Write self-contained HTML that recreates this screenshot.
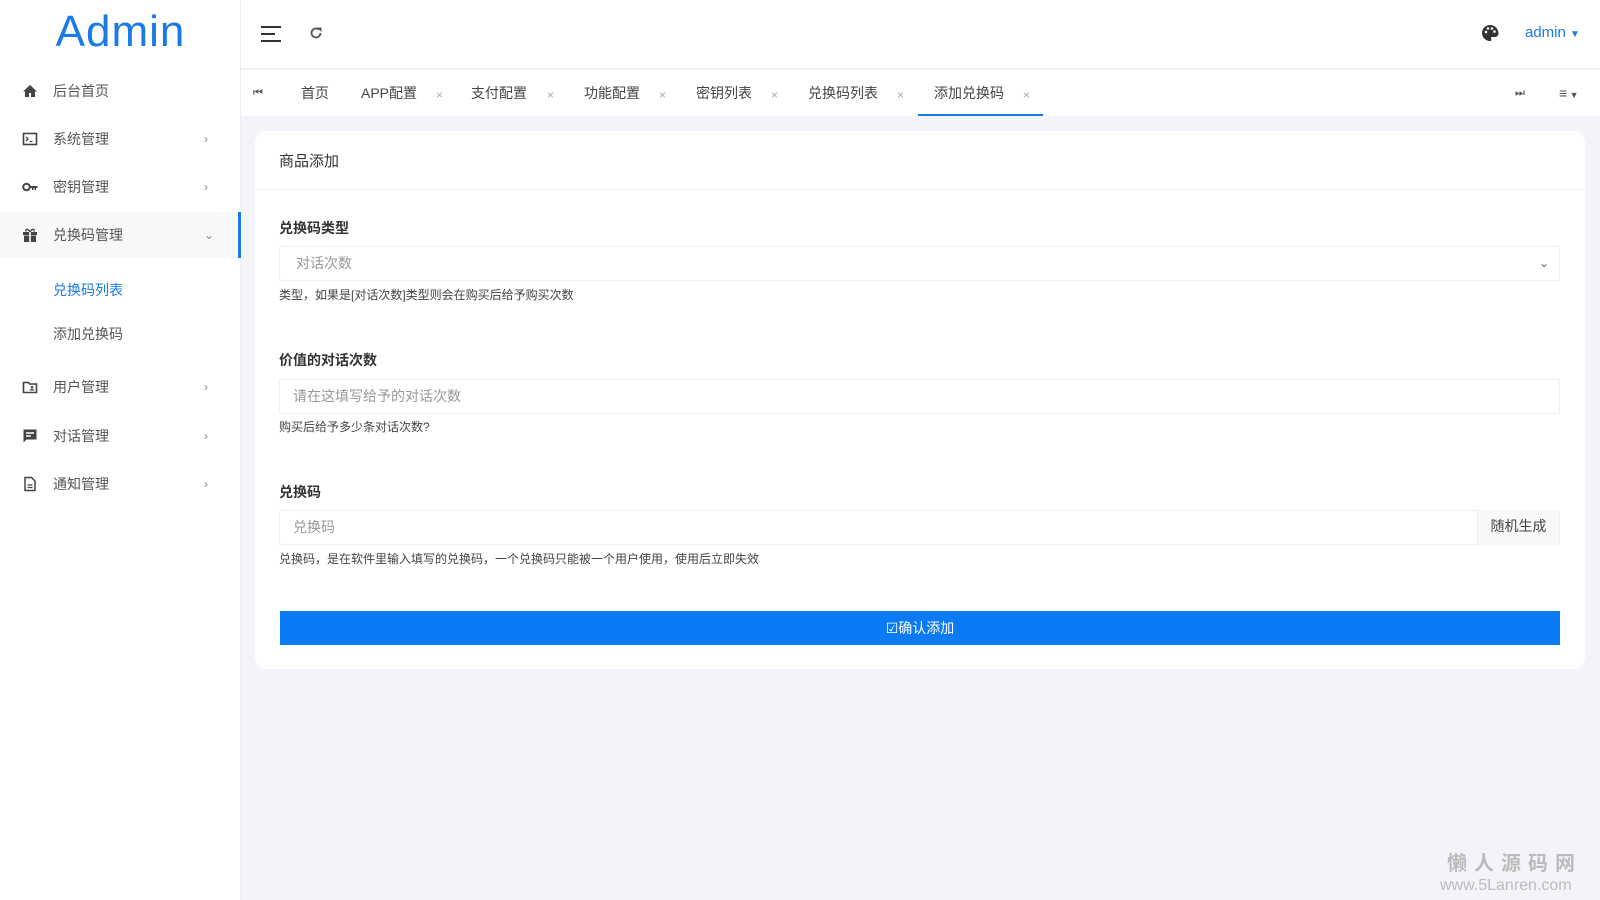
<!DOCTYPE html>
<html><head><meta charset="utf-8"><style>
*{box-sizing:border-box;margin:0;padding:0}
body{width:1600px;height:900px;overflow:hidden;background:#f3f4f9;font-family:"Liberation Sans","Noto Sans CJK SC",sans-serif;color:#333;position:relative}
.abs{position:absolute}
#side{left:0;top:0;width:241px;height:900px;background:#fff;border-right:1px solid #eceef3}
.logo{left:0;width:241px;top:7px;text-align:center;font-size:44px;color:#1a7ae8;letter-spacing:1px}
.mi{left:0;width:241px;height:46px;font-size:14px;color:#555;line-height:46px}
.mi .t{position:absolute;left:53px}
.mi .ic{position:absolute;left:22px;top:15px;width:16px;height:16px}
.mi .ar{position:absolute;left:204px;color:#888;font-size:12px}
.act{background:#f7f8fa;border-right:3px solid #1a7ae8}
#top{left:241px;top:0;width:1359px;height:69px;background:#fff;border-bottom:1px solid #eef0f4}
#tabs{left:241px;top:70px;width:1359px;height:46px;background:#fff}
.tab{top:0;height:46px;line-height:46px;font-size:14px;color:#444}
.x{top:2px;line-height:46px;font-size:12px;color:#aaa}
#card{left:255px;top:131px;width:1330px;height:538px;background:#fff;border-radius:12px}
.lbl{font-size:14px;font-weight:bold;color:#333}
.inp{height:35px;border:1px solid #eef0f3;border-radius:2px;font-size:14px;color:#999;line-height:33px;padding-left:13px}
.help{font-size:12px;color:#444}
</style></head><body>
<div id="side" class="abs">
 <div class="abs logo">Admin</div>
 <div class="abs mi" style="top:68px"><svg class="ic" viewBox="0 0 16 16"><path d="M8 2L1 8.5h2V14h4v-4h2v4h4V8.5h2z" fill="#444"/></svg><span class="t">后台首页</span></div>
 <div class="abs mi" style="top:116px"><svg class="ic" viewBox="0 0 16 16"><rect x="1.5" y="2.5" width="13" height="11" fill="none" stroke="#444" stroke-width="1.6"/><path d="M4 6l2 2-2 2M7.5 10.5h3" stroke="#444" fill="none" stroke-width="1.3"/></svg><span class="t">系统管理</span><span class="ar">›</span></div>
 <div class="abs mi" style="top:164px"><svg class="ic" viewBox="0 0 16 16"><circle cx="4.5" cy="8" r="3.3" fill="none" stroke="#444" stroke-width="2"/><path d="M7.5 7h8v2h-1.5v2h-1.5v-2h-1v2h-1.5v-2h-2.5z" fill="#444"/></svg><span class="t">密钥管理</span><span class="ar">›</span></div>
 <div class="abs mi act" style="top:212px"><svg class="ic" viewBox="0 0 16 16"><rect x="1" y="5" width="14" height="3" fill="#444"/><rect x="2" y="8.5" width="12" height="6.5" fill="#444"/><path d="M8 5C6 1 3 2 4 4.5M8 5c2-4 5-3 4-.5" stroke="#444" fill="none" stroke-width="1.4"/><rect x="7.2" y="5" width="1.6" height="10" fill="#fff"/></svg><span class="t">兑换码管理</span><span class="ar">⌄</span></div>
 <div class="abs mi" style="top:272px;color:#1a7ae8;height:36px;line-height:36px"><span class="t">兑换码列表</span></div>
 <div class="abs mi" style="top:316px;height:36px;line-height:36px"><span class="t">添加兑换码</span></div>
 <div class="abs mi" style="top:364px"><svg class="ic" viewBox="0 0 16 16"><path d="M1.5 3.5h5l1 1.5h7v8.5h-13z" fill="none" stroke="#444" stroke-width="1.6"/><circle cx="10" cy="8.3" r="1.3" fill="#444"/><path d="M7.5 11.5c0-2 5-2 5 0z" fill="#444"/></svg><span class="t">用户管理</span><span class="ar">›</span></div>
 <div class="abs mi" style="top:413px"><svg class="ic" viewBox="0 0 16 16"><path d="M1.5 1.5h13v10h-10l-3 3z" fill="#444"/><path d="M4 5h8M4 8h5" stroke="#fff" stroke-width="1.4"/></svg><span class="t">对话管理</span><span class="ar">›</span></div>
 <div class="abs mi" style="top:461px"><svg class="ic" viewBox="0 0 16 16"><path d="M3 1.5h6.5l3.5 3.5v9.5H3z" fill="none" stroke="#444" stroke-width="1.5"/><path d="M5.5 9h5M5.5 11.5h5" stroke="#444" stroke-width="1.3"/></svg><span class="t">通知管理</span><span class="ar">›</span></div>
</div>
<div id="top" class="abs">
 <svg class="abs" style="left:19px;top:25px" width="22" height="18" viewBox="0 0 22 18"><path d="M1 2h20M1 9h14M1 16h20" stroke="#333" stroke-width="2"/></svg>
 <svg class="abs" style="left:68px;top:26px" width="14" height="14" viewBox="0 0 14 14"><path d="M11.5 7a4.5 4.5 0 1 1-1.5-3.4" fill="none" stroke="#555" stroke-width="1.8"/><path d="M8 1.5h4.5v4.5z" fill="#555"/></svg>
 <svg class="abs" style="left:1240px;top:24px" width="18" height="18" viewBox="0 0 18 18"><path d="M9 1a8 8 0 1 0 0 16c1.5 0 1.8-1 1.2-2-.6-1 0-2 1.3-2H14a3.5 3.5 0 0 0 3.5-3.5C17.5 4.5 13.5 1 9 1z" fill="#333"/><circle cx="5" cy="8" r="1.3" fill="#fff"/><circle cx="7" cy="4.5" r="1.3" fill="#fff"/><circle cx="11" cy="4.5" r="1.3" fill="#fff"/><circle cx="13.5" cy="7.5" r="1.3" fill="#fff"/></svg>
 <div class="abs" style="left:1284px;top:24px;font-size:15px;color:#1a7ae8">admin <span style="font-size:10px">▼</span></div>
</div>
<div id="tabs" class="abs">
 <div class="abs tab" style="left:12px;font-size:11px;color:#555">⏮</div>
 <div class="abs tab" style="left:60px">首页</div>
 <div class="abs tab" style="left:120px">APP配置</div><div class="abs x" style="left:195px">×</div>
 <div class="abs tab" style="left:230px">支付配置</div><div class="abs x" style="left:306px">×</div>
 <div class="abs tab" style="left:343px">功能配置</div><div class="abs x" style="left:418px">×</div>
 <div class="abs tab" style="left:455px">密钥列表</div><div class="abs x" style="left:530px">×</div>
 <div class="abs tab" style="left:567px">兑换码列表</div><div class="abs x" style="left:656px">×</div>
 <div class="abs" style="left:677px;top:0;width:125px;height:46px;border-bottom:2px solid #1a7ae8"></div>
 <div class="abs tab" style="left:693px">添加兑换码</div><div class="abs x" style="left:782px">×</div>
 <div class="abs tab" style="left:1274px;font-size:11px;color:#555">⏭</div>
 <div class="abs tab" style="left:1318px;font-size:14px;color:#555">≡<span style="font-size:9px"> ▼</span></div>
</div>
<div id="card" class="abs">
 <div class="abs" style="left:24px;top:19px;font-size:15px;color:#333">商品添加</div>
 <div class="abs" style="left:0;top:58px;width:1330px;height:1px;background:#f0f1f4"></div>
 <div class="abs lbl" style="left:24px;top:87px">兑换码类型</div>
 <div class="abs inp" style="left:24px;top:115px;width:1281px;padding-left:16px">对话次数<span style="position:absolute;right:10px;color:#666;font-size:12px">⌄</span></div>
 <div class="abs help" style="left:24px;top:155px">类型，如果是[对话次数]类型则会在购买后给予购买次数</div>
 <div class="abs lbl" style="left:24px;top:219px">价值的对话次数</div>
 <div class="abs inp" style="left:24px;top:248px;width:1281px">请在这填写给予的对话次数</div>
 <div class="abs help" style="left:24px;top:287px">购买后给予多少条对话次数?</div>
 <div class="abs lbl" style="left:24px;top:351px">兑换码</div>
 <div class="abs inp" style="left:24px;top:379px;width:1281px">兑换码<span style="position:absolute;right:0;top:-1px;width:82px;height:35px;background:#f7f8fa;border-left:1px solid #eef0f3;color:#444;text-align:center">随机生成</span></div>
 <div class="abs help" style="left:24px;top:419px">兑换码，是在软件里输入填写的兑换码，一个兑换码只能被一个用户使用，使用后立即失效</div>
 <div class="abs" style="left:25px;top:480px;width:1280px;height:34px;background:#0a7bf5;color:#fff;font-size:14px;text-align:center;line-height:34px">☑确认添加</div>
</div>
<div class="abs" style="left:1447px;top:847px;font-size:20px;font-weight:bold;color:#bbb;letter-spacing:7px">懒人源码网</div>
<div class="abs" style="left:1440px;top:877px;font-size:16px;color:#bbb">www.5Lanren.com</div>
</body></html>
